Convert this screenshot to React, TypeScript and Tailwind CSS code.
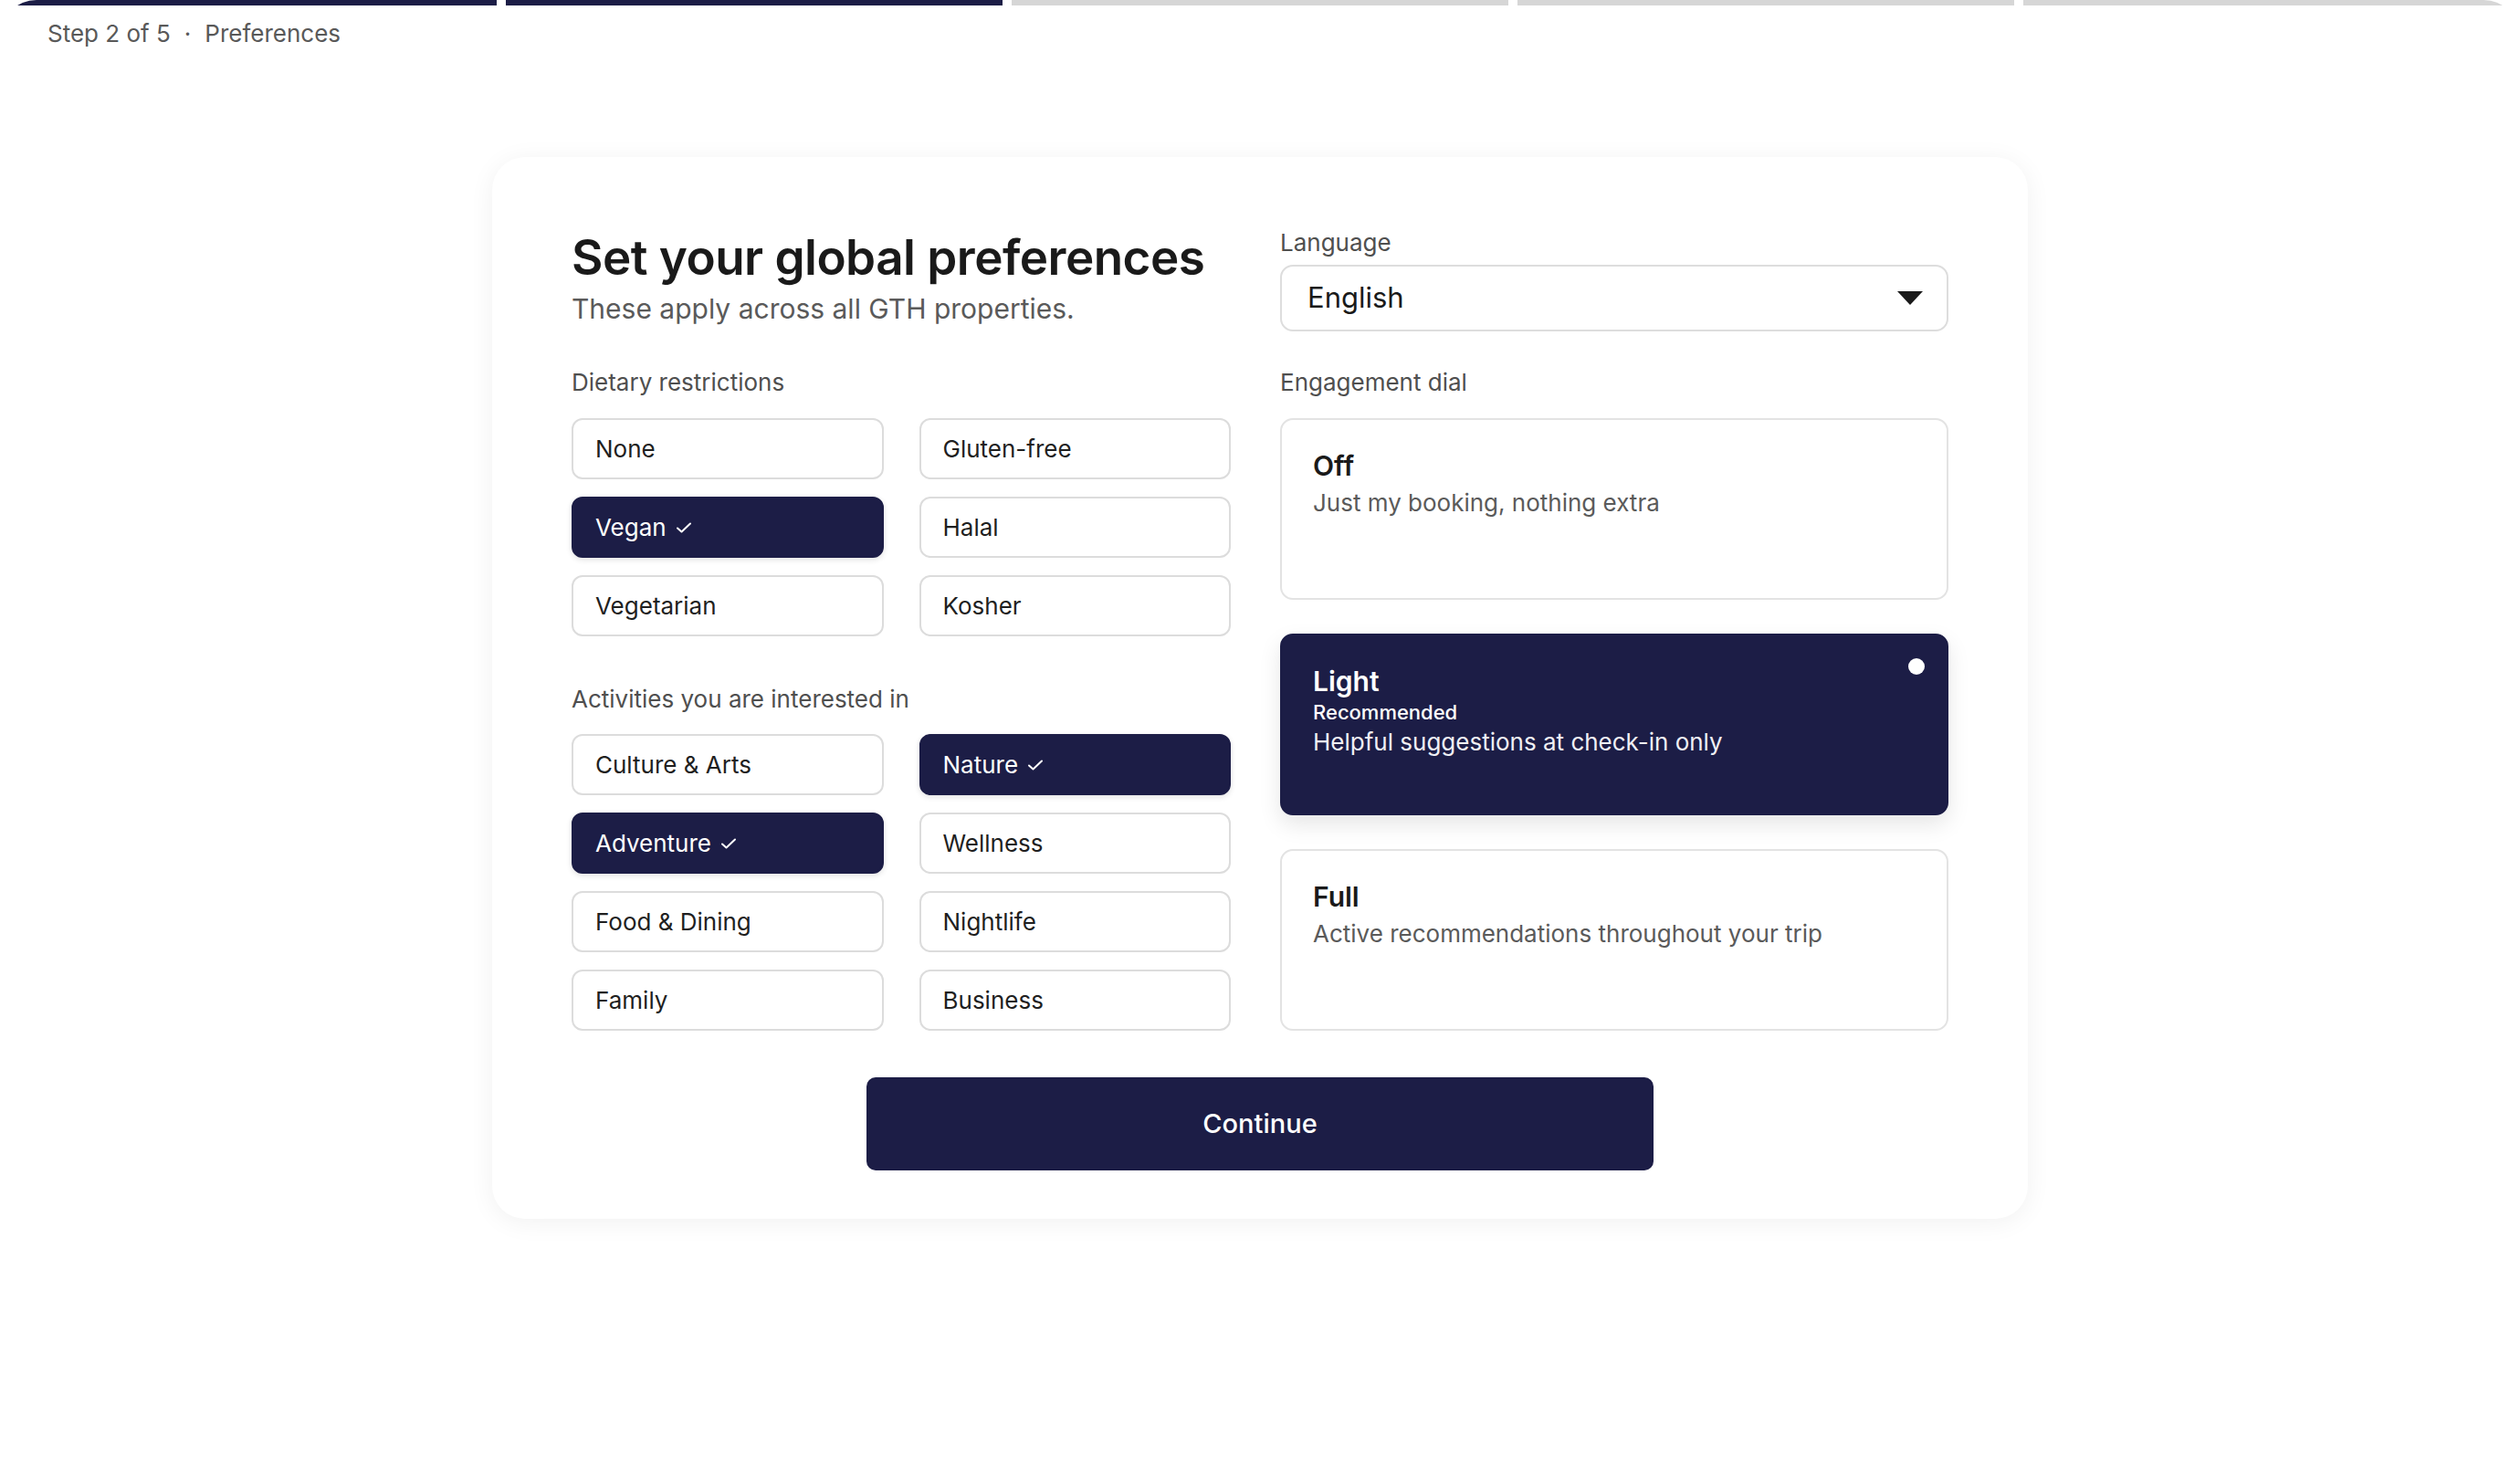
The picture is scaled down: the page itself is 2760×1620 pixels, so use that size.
import { useState } from 'react'

const NAVY = 'bg-[#1c1d46]'

const dietary = ['None', 'Gluten-free', 'Vegan', 'Halal', 'Vegetarian', 'Kosher']
const activities = [
  'Culture & Arts',
  'Nature',
  'Adventure',
  'Wellness',
  'Food & Dining',
  'Nightlife',
  'Family',
  'Business',
]

const dials = [
  { id: 'off', title: 'Off', desc: 'Just my booking, nothing extra' },
  { id: 'light', title: 'Light', tag: 'Recommended', desc: 'Helpful suggestions at check-in only' },
  { id: 'full', title: 'Full', desc: 'Active recommendations throughout your trip' },
]

function CheckMark() {
  return (
    <svg width="18" height="14" viewBox="0 0 18 14" fill="none" className="ml-[10px]">
      <path d="M2 7.5 L6.5 11.5 L16 2.5" stroke="currentColor" strokeWidth="2" strokeLinecap="round" strokeLinejoin="round" />
    </svg>
  )
}

function Chip({ label, selected, onClick }: { label: string; selected: boolean; onClick: () => void }) {
  return (
    <button
      onClick={onClick}
      className={`h-[67px] flex items-center pl-[24px] rounded-[12px] border-2 text-[26px] text-left ${
        selected
          ? 'bg-[#1c1d46] border-[#1c1d46] text-white shadow-[0_2px_6px_rgba(0,0,0,0.12)]'
          : 'bg-white border-[#dcdcdc] text-[#1f1f1f]'
      }`}
    >
      {label}
      {selected && <CheckMark />}
    </button>
  )
}

function Label({ children }: { children: React.ReactNode }) {
  return <p className="text-[26px] leading-[36px] text-[#4f4f4f]">{children}</p>
}

export default function App() {
  const [diet, setDiet] = useState<string[]>(['Vegan'])
  const [acts, setActs] = useState<string[]>(['Nature', 'Adventure'])
  const [dial, setDial] = useState('light')

  const toggle = (list: string[], set: (v: string[]) => void, v: string) =>
    set(list.includes(v) ? list.filter((x) => x !== v) : [...list, v])

  return (
    <div className="min-h-[1620px] w-full bg-white overflow-hidden rounded-t-[40px] font-['Inter',sans-serif]">
      {/* Progress */}
      <div className="flex gap-[10px] h-[6px]">
        {[0, 1, 2, 3, 4].map((i) => (
          <div key={i} className={`flex-1 ${i < 2 ? NAVY : 'bg-[#d6d6d6]'}`} />
        ))}
      </div>

      <p className="pl-[52px] pt-[13px] text-[26px] leading-[36px] text-[#595959]">
        Step 2 of 5<span className="mx-[15px]">·</span>Preferences
      </p>

      {/* Card */}
      <div className="mx-auto mt-[117px] w-[1682px] rounded-[36px] bg-white px-[87px] pt-[78px] pb-[53px] shadow-[0_4px_28px_rgba(0,0,0,0.06)]">
        <div className="grid grid-cols-[722px_732px] gap-x-[54px]">
          {/* Left */}
          <div>
            <h1 className="text-[53px] leading-[64px] font-semibold tracking-[-0.01em] text-[#1a1a1a]">
              Set your global preferences
            </h1>
            <p className="mt-[4px] text-[30px] leading-[40px] text-[#5a5a5a]">
              These apply across all GTH properties.
            </p>

            <div className="mt-[43px]">
              <Label>Dietary restrictions</Label>
            </div>
            <div className="mt-[21px] grid grid-cols-2 gap-x-[39px] gap-y-[19px]">
              {dietary.map((d) => (
                <Chip key={d} label={d} selected={diet.includes(d)} onClick={() => toggle(diet, setDiet, d)} />
              ))}
            </div>

            <div className="mt-[51px]">
              <Label>Activities you are interested in</Label>
            </div>
            <div className="mt-[20px] grid grid-cols-2 gap-x-[39px] gap-y-[19px]">
              {activities.map((a) => (
                <Chip key={a} label={a} selected={acts.includes(a)} onClick={() => toggle(acts, setActs, a)} />
              ))}
            </div>
          </div>

          {/* Right */}
          <div>
            <div className="-mt-[2px]">
              <Label>Language</Label>
            </div>
            <div className="mt-[6px] h-[73px] flex items-center justify-between pl-[28px] pr-[26px] rounded-[14px] border-2 border-[#dddddd] bg-white">
              <span className="text-[31px] text-[#1a1a1a]">English</span>
              <svg width="28" height="15" viewBox="0 0 28 15">
                <path d="M0 0 H28 L14 15 Z" fill="#1a1a1a" />
              </svg>
            </div>

            <div className="mt-[38px]">
              <Label>Engagement dial</Label>
            </div>
            <div className="mt-[21px] flex flex-col gap-[37px]">
              {dials.map((d) => {
                const active = dial === d.id
                return (
                  <div
                    key={d.id}
                    role="button"
                    onClick={() => setDial(d.id)}
                    className={`relative h-[199px] cursor-pointer rounded-[14px] border-2 pl-[34px] pt-[31px] ${
                      active
                        ? 'bg-[#1c1d46] border-[#1c1d46] shadow-[0_10px_24px_rgba(0,0,0,0.10)]'
                        : 'bg-white border-[#e3e3e3]'
                    }`}
                  >
                    <p className={`text-[30px] leading-[38px] font-semibold ${active ? 'text-white' : 'text-[#1a1a1a]'}`}>
                      {d.title}
                    </p>
                    {d.tag && <p className="mt-[1px] text-[22px] leading-[28px] font-medium text-white">{d.tag}</p>}
                    <p
                      className={`${d.tag ? 'mt-[1px]' : 'mt-[4px]'} text-[26px] leading-[36px] ${
                        active ? 'text-[#f0f0f5]' : 'text-[#5a5a5a]'
                      }`}
                    >
                      {d.desc}
                    </p>
                    {active && (
                      <span className="absolute top-[25px] right-[24px] h-[18px] w-[18px] rounded-full bg-white" />
                    )}
                  </div>
                )
              })}
            </div>
          </div>
        </div>

        <button className="mx-auto mt-[51px] flex h-[102px] w-[862px] items-center justify-center rounded-[10px] bg-[#1c1d46] text-[29px] font-medium text-white">
          Continue
        </button>
      </div>
    </div>
  )
}
